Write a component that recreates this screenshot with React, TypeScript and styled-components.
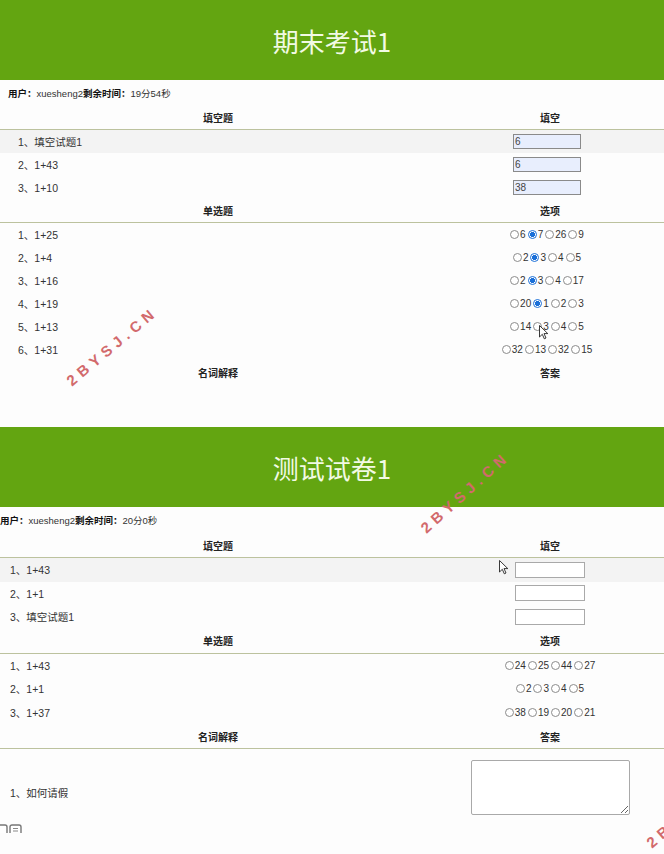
import React from 'react';
import styled, { createGlobalStyle } from 'styled-components';

const GlobalStyle = createGlobalStyle`
  html, body {
    margin: 0;
    padding: 0;
    background: #fdfdfd;
  }
  body {
    font-family: "Liberation Sans", "Noto Sans CJK SC", sans-serif;
    color: #333;
  }
`;

const Page = styled.div`
  position: relative;
  width: 664px;
  min-height: 854px;
  overflow: hidden;
`;

const Panel = styled.section<{ $gap: number }>`
  margin-bottom: ${({ $gap }) => $gap}px;
  background: #fdfdfd;
`;

const Banner = styled.header`
  height: 80px;
  display: flex;
  align-items: center;
  justify-content: center;
  background: #63a511;
`;

const Title = styled.h1`
  margin: 0;
  font-family: "Noto Sans CJK SC", sans-serif;
  font-size: 26px;
  font-weight: 400;
  color: #f2fae4;
`;

const UserLine = styled.div<{ $inset: number }>`
  height: 26px;
  display: flex;
  align-items: center;
  padding-left: ${({ $inset }) => $inset}px;
  font-size: 9.5px;
  color: #333;

  b {
    color: #111;
  }
`;

const HeadRow = styled.div<{ $h: number; $line: boolean }>`
  display: grid;
  grid-template-columns: 436px 1fr;
  align-items: center;
  height: ${({ $h }) => $h}px;
  border-bottom: 1px solid ${({ $line }) => ($line ? '#bcc29e' : 'transparent')};
  box-sizing: border-box;
  font-family: "Noto Sans CJK SC", sans-serif;
  font-size: 10px;
  font-weight: 700;
  color: #222;
  text-align: center;
`;

const Row = styled.div<{ $h: number; $shade?: boolean }>`
  display: grid;
  grid-template-columns: 436px 1fr;
  align-items: center;
  height: ${({ $h }) => $h}px;
  background: ${({ $shade }) => ($shade ? '#f3f3f3' : 'transparent')};
`;

const TermRow = styled.div`
  display: grid;
  grid-template-columns: 436px 1fr;
  align-items: center;
  padding: 11px 0 6px;
`;

const QText = styled.div<{ $inset: number; $drop?: number }>`
  padding-left: ${({ $inset }) => $inset}px;
  padding-top: ${({ $drop }) => $drop || 0}px;
  font-size: 10.5px;
  color: #333;
`;

const AnswerCell = styled.div<{ $nudge?: number }>`
  display: flex;
  align-items: center;
  justify-content: center;
  padding-right: ${({ $nudge }) => $nudge || 0}px;
`;

const BlankInput = styled.input<{ $filled: boolean }>`
  width: ${({ $filled }) => ($filled ? 68 : 70)}px;
  height: ${({ $filled }) => ($filled ? 15 : 16)}px;
  box-sizing: border-box;
  margin: 0;
  padding: 0 1px;
  border: 1px solid ${({ $filled }) => ($filled ? '#8a8a8a' : '#a9a9a9')};
  background: ${({ $filled }) => ($filled ? '#e8eefd' : '#fff')};
  font-family: "Liberation Sans", sans-serif;
  font-size: 10px;
  color: #444;
  outline: none;
`;

const Options = styled.div`
  display: flex;
  align-items: center;
  gap: 2px;
`;

const Option = styled.label`
  display: flex;
  align-items: center;
  gap: 1px;
  font-size: 10px;
  color: #333;
`;

const Radio = styled.input.attrs({ type: 'radio' })`
  appearance: none;
  width: 9px;
  height: 9px;
  margin: 0;
  border-radius: 50%;
  border: 1px solid #8c8c8c;
  background: #fff;
  box-sizing: border-box;

  &:checked {
    border-color: #1a6fd8;
    background: radial-gradient(circle, #1a6fd8 0 2.4px, #fff 2.8px);
  }
`;

const AnswerBox = styled.textarea`
  width: 159px;
  height: 55px;
  box-sizing: border-box;
  margin: 0;
  border: 1px solid #a9a9a9;
  border-radius: 2px;
  background: #fff;
  resize: both;
`;

const Footer = styled.div`
  height: 12px;
  display: flex;
  align-items: flex-end;
`;

const Watermark = styled.span<{ $x: number; $y: number; $turn: number }>`
  position: absolute;
  left: ${({ $x }) => $x}px;
  top: ${({ $y }) => $y}px;
  transform: translate(-50%, -50%) rotate(${({ $turn }) => $turn}deg);
  font-family: "Liberation Sans", sans-serif;
  font-size: 15px;
  font-weight: 700;
  letter-spacing: 5px;
  color: #d26a6c;
  white-space: nowrap;
  pointer-events: none;
`;

const Pointer = styled.svg<{ $x: number; $y: number }>`
  position: absolute;
  left: ${({ $x }) => $x}px;
  top: ${({ $y }) => $y}px;
  width: 10px;
  height: 15px;
  pointer-events: none;
`;

type Fill = { q: string; v: string };
type Single = { q: string; opts: string[]; sel: number };

type Exam = {
  title: string;
  remain: string;
  userInset: number;
  rowInset: number;
  answerNudge: number;
  headH: number;
  rowH: number;
  gap: number;
  fills: Fill[];
  singles: Single[];
  terms: string[];
};

const exams: Exam[] = [
  {
    title: '期末考试1',
    remain: '19分54秒',
    userInset: 8,
    rowInset: 18,
    answerNudge: 6,
    headH: 24,
    rowH: 23,
    gap: 42,
    fills: [
      { q: '填空试题1', v: '6' },
      { q: '1+43', v: '6' },
      { q: '1+10', v: '38' },
    ],
    singles: [
      { q: '1+25', opts: ['6', '7', '26', '9'], sel: 1 },
      { q: '1+4', opts: ['2', '3', '4', '5'], sel: 1 },
      { q: '1+16', opts: ['2', '3', '4', '17'], sel: 1 },
      { q: '1+19', opts: ['20', '1', '2', '3'], sel: 1 },
      { q: '1+13', opts: ['14', '3', '4', '5'], sel: -1 },
      { q: '1+31', opts: ['32', '13', '32', '15'], sel: -1 },
    ],
    terms: [],
  },
  {
    title: '测试试卷1',
    remain: '20分0秒',
    userInset: 0,
    rowInset: 10,
    answerNudge: 0,
    headH: 25,
    rowH: 23.5,
    gap: 0,
    fills: [
      { q: '1+43', v: '' },
      { q: '1+1', v: '' },
      { q: '填空试题1', v: '' },
    ],
    singles: [
      { q: '1+43', opts: ['24', '25', '44', '27'], sel: -1 },
      { q: '1+1', opts: ['2', '3', '4', '5'], sel: -1 },
      { q: '1+37', opts: ['38', '19', '20', '21'], sel: -1 },
    ],
    terms: ['如何请假'],
  },
];

const ExamPanel = ({ exam, index }: { exam: Exam; index: number }) => (
  <Panel $gap={exam.gap}>
    <Banner>
      <Title>{exam.title}</Title>
    </Banner>
    <UserLine $inset={exam.userInset}>
      <b>用户：</b>xuesheng2<b>剩余时间：</b>{exam.remain}
    </UserLine>

    <HeadRow $h={exam.headH} $line>
      <span>填空题</span>
      <span>填空</span>
    </HeadRow>
    {exam.fills.map((f, i) => (
      <Row key={i} $h={exam.rowH} $shade={i === 0}>
        <QText $inset={exam.rowInset}>{i + 1}、{f.q}</QText>
        <AnswerCell $nudge={exam.answerNudge}>
          <BlankInput $filled={f.v !== ''} defaultValue={f.v} />
        </AnswerCell>
      </Row>
    ))}

    <HeadRow $h={exam.headH} $line>
      <span>单选题</span>
      <span>选项</span>
    </HeadRow>
    {exam.singles.map((s, i) => (
      <Row key={i} $h={exam.rowH}>
        <QText $inset={exam.rowInset}>{i + 1}、{s.q}</QText>
        <AnswerCell $nudge={exam.answerNudge}>
          <Options>
            {s.opts.map((o, j) => (
              <Option key={j}>
                <Radio name={`e${index}-s${i}`} defaultChecked={s.sel === j} />
                {o}
              </Option>
            ))}
          </Options>
        </AnswerCell>
      </Row>
    ))}

    <HeadRow $h={exam.headH} $line={exam.terms.length > 0}>
      <span>名词解释</span>
      <span>答案</span>
    </HeadRow>
    {exam.terms.map((t, i) => (
      <TermRow key={i}>
        <QText $inset={exam.rowInset} $drop={10}>{i + 1}、{t}</QText>
        <AnswerCell>
          <AnswerBox />
        </AnswerCell>
      </TermRow>
    ))}
  </Panel>
);

const ArrowCursor = ({ x, y }: { x: number; y: number }) => (
  <Pointer $x={x} $y={y} viewBox="0 0 10 15">
    <path
      d="M0.5 0.5 L0.5 12 L3.3 9.3 L5.3 13.8 L7 13 L5 8.6 L8.8 8.6 Z"
      fill="#fff"
      stroke="#222"
      strokeWidth="0.9"
      strokeLinejoin="round"
    />
  </Pointer>
);

export default function App() {
  return (
    <>
      <GlobalStyle />
      <Page>
        {exams.map((e, i) => (
          <ExamPanel key={e.title} exam={e} index={i} />
        ))}
        <Footer>
          <svg width="24" height="9" viewBox="0 0 24 9">
            <rect x="-3" y="1" width="10" height="10" rx="2" fill="#fff" stroke="#777" strokeWidth="1.4" />
            <rect x="10" y="1" width="11" height="10" rx="2" fill="#fff" stroke="#777" strokeWidth="1.4" />
            <line x1="13" y1="4.5" x2="18" y2="4.5" stroke="#888" />
            <line x1="13" y1="7" x2="18" y2="7" stroke="#888" />
          </svg>
        </Footer>

        <Watermark $x={112} $y={346} $turn={-40}>2BYSJ.CN</Watermark>
        <Watermark $x={465} $y={492} $turn={-42}>2BYSJ.CN</Watermark>
        <Watermark $x={692} $y={808} $turn={-40}>2BYSJ.CN</Watermark>

        <ArrowCursor x={539} y={325} />
        <ArrowCursor x={499} y={560} />
      </Page>
    </>
  );
}
